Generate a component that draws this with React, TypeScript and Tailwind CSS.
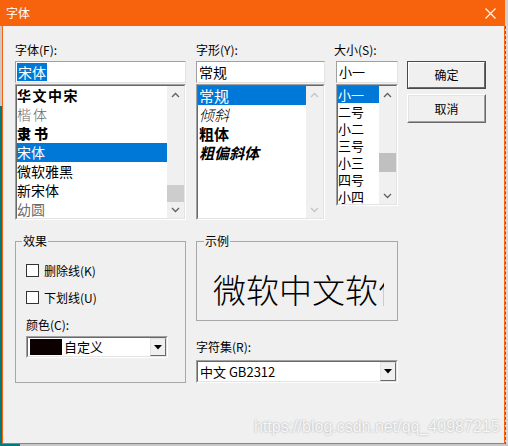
import React from "react";

function Sunken({ className = "", children }: { className?: string; children?: React.ReactNode }) {
  return (
    <div className={`border border-t-[#a0a0a0] border-l-[#a0a0a0] border-r-white border-b-white ${className}`}>
      <div className="h-full w-full border border-t-[#696969] border-l-[#696969] border-r-[#e3e3e3] border-b-[#e3e3e3] bg-white flex overflow-hidden">
        {children}
      </div>
    </div>
  );
}

function InputBox({ className = "", children }: { className?: string; children?: React.ReactNode }) {
  return (
    <div className={`border border-t-[#a0a0a0] border-l-[#a0a0a0] border-r-[#e3e3e3] border-b-[#e3e3e3] bg-white flex items-center pl-[1px] ${className}`}>
      {children}
    </div>
  );
}

function Chevron({ up, color }: { up?: boolean; color: string }) {
  return (
    <svg width="9" height="6" viewBox="0 0 9 6">
      <polyline
        points={up ? "1,5 4.5,1.5 8,5" : "1,1 4.5,4.5 8,1"}
        fill="none"
        stroke={color}
        strokeWidth="1.3"
      />
    </svg>
  );
}

function ScrollBar({
  color,
  thumbH,
  after,
  thumbColor = "bg-[#cdcdcd]",
  downH = 16,
}: {
  color: string;
  thumbH?: number;
  after?: number;
  thumbColor?: string;
  downH?: number;
}) {
  return (
    <div className="w-[17px] h-full bg-[#f0f0f0] flex flex-col shrink-0">
      <div className="h-[17px] flex items-center justify-center">
        <Chevron up color={color} />
      </div>
      <div className="flex-1" />
      {thumbH ? <div className={`w-full ${thumbColor}`} style={{ height: thumbH }} /> : null}
      {after ? <div style={{ height: after }} /> : null}
      <div className="flex items-center justify-center" style={{ height: downH }}>
        <Chevron color={color} />
      </div>
    </div>
  );
}

function DropButton() {
  return (
    <div className="w-[16px] h-full border border-t-[#e3e3e3] border-l-[#e3e3e3] border-r-[#696969] border-b-[#696969] bg-[#f0f0f0] flex items-center justify-center shrink-0">
      <svg width="8" height="5" viewBox="0 0 8 5">
        <polygon points="0,0 8,0 4,4.5" fill="#000" />
      </svg>
    </div>
  );
}

function Check({ label }: { label: string }) {
  return (
    <div className="flex items-center h-[13px]">
      <div className="w-[13px] h-[13px] border border-[#333333] bg-white shrink-0" />
      <span className="ml-[5px] text-[12px] leading-[16px]">{label}</span>
    </div>
  );
}

const fonts: { t: string; c?: string; sel?: boolean }[] = [
  { t: "华文中宋", c: "font-bold tracking-[1.5px]" },
  { t: "楷体", c: "text-[#6a6a6a] font-light tracking-[2px]" },
  { t: "隶书", c: "font-black text-[12px] tracking-[3px]" },
  { t: "宋体", sel: true },
  { t: "微软雅黑" },
  { t: "新宋体" },
  { t: "幼圆", c: "text-[#6a6a6a]" },
];

const styles: { t: string; c?: string; sel?: boolean }[] = [
  { t: "常规", sel: true },
  { t: "倾斜", c: "italic font-light" },
  { t: "粗体", c: "font-bold" },
  { t: "粗偏斜体", c: "italic font-bold text-[14px]" },
];

const sizes = ["小一", "二号", "小二", "三号", "小三", "四号", "小四"];

export default function App() {
  return (
    <div className="w-[508px] h-[446px] bg-[#cfcfcf] flex flex-col overflow-hidden font-['Noto_Sans_CJK_SC','Noto_Sans',sans-serif] text-black">
      <div className="flex h-[444px]">
        <div className="w-[2px] h-full flex flex-col">
          <div className="h-[26px] bg-[#f7630c]" />
          <div className="h-[80px] bg-[#c9c9c9]" />
          <div className="flex-1 bg-[#007a7c]" />
        </div>
        <div className="w-[503px] h-full flex flex-col">
          <div className="h-[26px] bg-[#f7630c] flex items-center justify-between pl-[4px] pr-[9px] shrink-0">
            <span className="text-white text-[12px] leading-[16px]">字体</span>
            <svg width="11" height="11" viewBox="0 0 11 11">
              <path d="M0.5 0.5 L10.5 10.5 M10.5 0.5 L0.5 10.5" stroke="#fff" strokeWidth="1.1" />
            </svg>
          </div>
          <div className="flex-1 bg-[#f0f0f0] border-x border-b border-[#f7630c] pl-[12px] pt-[16px] relative">
            {/* top row */}
            <div className="flex items-start">
              {/* font column */}
              <div className="w-[171px] flex flex-col">
                <div className="h-[16px] text-[12px] leading-[16px]">字体(F):</div>
                <InputBox className="mt-[3px] h-[22px]">
                  <span className="bg-[#0078d7] text-white text-[14px] leading-[18px] px-[1px]">宋体</span>
                </InputBox>
                <Sunken className="mt-[1px] h-[136px]">
                  <div className="flex-1 flex flex-col">
                    {fonts.map((f) => (
                      <div
                        key={f.t}
                        className={`h-[19px] flex items-center text-[14px] leading-[19px] whitespace-nowrap ${
                          f.sel ? "bg-[#0078d7] text-white" : ""
                        } ${f.c ?? ""}`}
                      >
                        {f.t}
                      </div>
                    ))}
                  </div>
                  <ScrollBar color="#606060" thumbH={17} />
                </Sunken>
              </div>
              {/* style column */}
              <div className="ml-[10px] w-[129px] flex flex-col">
                <div className="h-[16px] text-[12px] leading-[16px]">字形(Y):</div>
                <InputBox className="mt-[3px] h-[22px]">
                  <span className="text-[14px] leading-[18px] px-[1px]">常规</span>
                </InputBox>
                <Sunken className="mt-[1px] h-[136px]">
                  <div className="flex-1 flex flex-col">
                    {styles.map((f) => (
                      <div
                        key={f.t}
                        className={`h-[19px] flex items-center text-[15px] leading-[19px] whitespace-nowrap pl-[1px] ${
                          f.sel ? "bg-[#0078d7] text-white" : ""
                        } ${f.c ?? ""}`}
                      >
                        {f.t}
                      </div>
                    ))}
                  </div>
                  <ScrollBar color="#c4c4c4" />
                </Sunken>
              </div>
              {/* size column */}
              <div className="ml-[11px] w-[62px] flex flex-col">
                <div className="h-[16px] text-[12px] leading-[16px] -ml-[2px]">大小(S):</div>
                <InputBox className="mt-[3px] h-[22px]">
                  <span className="text-[13px] leading-[18px] px-[1px]">小一</span>
                </InputBox>
                <Sunken className="mt-[1px] h-[122px]">
                  <div className="flex-1 flex flex-col">
                    {sizes.map((s, i) => (
                      <div
                        key={s}
                        className={`h-[17px] flex items-center text-[13px] leading-[17px] whitespace-nowrap ${
                          i === 0 ? "bg-[#0078d7] text-white" : ""
                        }`}
                      >
                        {s}
                      </div>
                    ))}
                  </div>
                  <ScrollBar color="#606060" thumbH={19} after={16} thumbColor="bg-[#c0c0c0]" />
                </Sunken>
              </div>
              {/* buttons */}
              <div className="ml-[9px] w-[79px] mt-[19px] flex flex-col">
                <div className="h-[28px] border border-[#4a4a4a]">
                  <div className="h-full border border-t-white border-l-white border-r-[#696969] border-b-[#696969] bg-[#f0f0f0] flex items-center justify-center text-[12px] leading-[16px]">
                    确定
                  </div>
                </div>
                <div className="mt-[5px] h-[29px] border border-t-white border-l-white border-r-[#696969] border-b-[#696969]">
                  <div className="h-full border border-t-[#e3e3e3] border-l-[#e3e3e3] border-r-[#a0a0a0] border-b-[#a0a0a0] bg-[#f0f0f0] flex items-center justify-center text-[12px] leading-[16px]">
                    取消
                  </div>
                </div>
              </div>
            </div>

            {/* bottom row */}
            <div className="flex items-start mt-[21px]">
              <div className="w-[171px] h-[142px] border border-[#a8a8a8] relative pl-[10px] pt-[22px] flex flex-col">
                <span className="absolute -top-[9px] left-[6px] px-[1px] bg-[#f0f0f0] text-[12px] leading-[16px]">效果</span>
                <Check label="删除线(K)" />
                <div className="mt-[14px]">
                  <Check label="下划线(U)" />
                </div>
                <div className="mt-[13px] h-[16px] text-[12px] leading-[16px]">颜色(C):</div>
                <Sunken className="mt-[3px] h-[22px] w-[142px]">
                  <div className="flex-1 flex items-center">
                    <div className="ml-[2px] w-[32px] h-[16px] bg-[#0c0000]" />
                    <span className="ml-[2px] text-[13px] leading-[18px]">自定义</span>
                  </div>
                  <DropButton />
                </Sunken>
              </div>
              <div className="ml-[10px] w-[202px] flex flex-col">
                <div className="h-[80px] border border-[#a8a8a8] relative">
                  <span className="absolute -top-[9px] left-[7px] px-[1px] bg-[#f0f0f0] text-[12px] leading-[16px]">示例</span>
                  <div className="mt-[28px] ml-[16px] mr-[13px] h-[38px] overflow-hidden whitespace-nowrap text-[33px] leading-[38px] font-light">
                    微软中文软件
                  </div>
                </div>
                <div className="mt-[18px] h-[16px] text-[12px] leading-[16px]">字符集(R):</div>
                <Sunken className="mt-[5px] h-[23px]">
                  <div className="flex-1 flex items-center pl-[2px] text-[13px] leading-[18px]">中文 GB2312</div>
                  <DropButton />
                </Sunken>
              </div>
            </div>

            <div className="absolute left-[251px] top-[391px] text-[16px] leading-[20px] font-['Liberation_Sans',sans-serif] text-[#f7f7f7] [text-shadow:0_0_2px_#a0a0a0] whitespace-nowrap">
              https://blog.csdn.net/qq_40987215
            </div>
          </div>
        </div>
        <div className="w-[3px] h-full bg-[#d6d6d6] border-l border-dashed border-l-[#2e8b2e] mt-[26px]" />
      </div>
      <div className="flex-1 flex">
        <div className="w-[20px] bg-[#007a7c]" />
        <div className="flex-1 bg-[#c8c8c8]" />
      </div>
    </div>
  );
}
